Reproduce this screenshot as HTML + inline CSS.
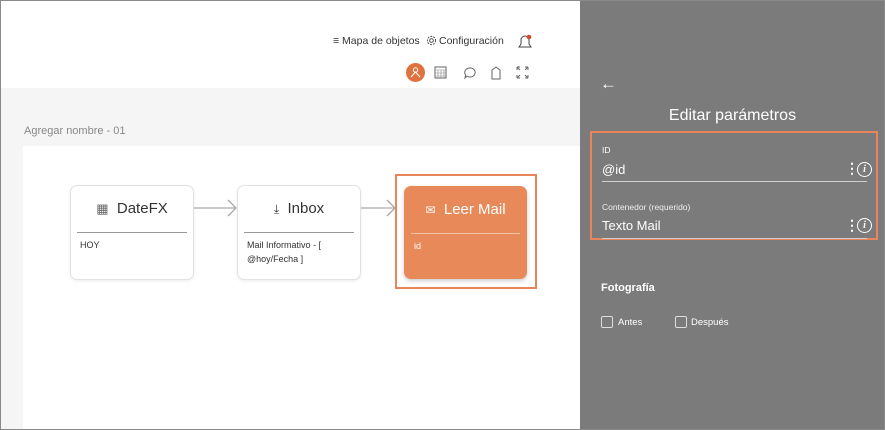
<!DOCTYPE html>
<html><head><meta charset="utf-8"><style>
*{box-sizing:border-box;margin:0;padding:0}
body{width:885px;height:430px;overflow:hidden;font-family:"Liberation Sans",sans-serif;background:#fff;position:relative}
.frame{position:absolute;inset:0;border:1px solid #8a8a8a;z-index:10;pointer-events:none}
.top{position:absolute;left:0;top:0;width:580px;height:88px;background:#fff}
.gray{position:absolute;left:0;top:88px;width:580px;height:342px;background:#f5f5f5}
.canvas{position:absolute;left:23px;top:146px;width:557px;height:284px;background:#fff}
.t{position:absolute;white-space:nowrap}
.card{position:absolute;top:185px;width:124px;height:95px;background:#fff;border:1px solid #e2e2e2;border-radius:7px;box-shadow:0 1px 3px rgba(0,0,0,.08)}
.card .h{position:absolute;top:14px;left:0;right:0;text-align:center;font-size:15px;color:#333}
.card .ln{position:absolute;top:46px;left:6px;right:6px;border-top:1px solid #999}
.card .b{position:absolute;top:52px;left:9px;font-size:9px;color:#333;line-height:14px}
.panel{position:absolute;left:580px;top:0;width:305px;height:430px;background:#7b7b7b;color:#fff}
.ul{position:absolute;height:1px;background:#d0d0d0}
.cb{position:absolute;width:12px;height:12px;border:1px solid #ddd;border-radius:2px}
</style></head><body>
<div class="top"></div>
<div class="gray"></div>
<div class="canvas"></div>
<div class="t" style="left:333px;top:35px;font-size:10.5px;color:#333">≡ Mapa de objetos</div>
<svg class="t" style="left:426px;top:35px" width="11" height="11" viewBox="0 0 12 12"><circle cx="6" cy="6" r="2" fill="none" stroke="#444"/><circle cx="6" cy="6" r="4.5" fill="none" stroke="#444" stroke-dasharray="2 1.3"/></svg>
<div class="t" style="left:439px;top:35px;font-size:10.5px;color:#333">Configuración</div>
<svg class="t" style="left:516px;top:32px" width="18" height="18" viewBox="0 0 18 18"><path d="M3 15h12l-2-3V8a4 4 0 0 0-8 0v4z" fill="none" stroke="#444"/><circle cx="13" cy="5" r="2.3" fill="#d9432f"/></svg>
<div class="t" style="left:406px;top:63px;width:19px;height:19px;border-radius:50%;background:#e0723f"></div>
<svg class="t" style="left:409px;top:66px" width="13" height="13" viewBox="0 0 13 13"><circle cx="6.5" cy="4" r="2.2" fill="none" stroke="#fff"/><path d="M2 11l4.5-5 4.5 5" fill="none" stroke="#fff"/></svg>
<svg class="t" style="left:434px;top:66px" width="13" height="13" viewBox="0 0 13 13"><rect x="1" y="1" width="11" height="11" fill="none" stroke="#666"/><path d="M1 4h11M1 7h11M1 10h11M4 4v8M7 4v8M10 4v8" stroke="#888" stroke-width=".6"/></svg>
<svg class="t" style="left:463px;top:66px" width="14" height="14" viewBox="0 0 14 14"><path d="M7 2a5 4.5 0 1 1-3 8l-2 2 .6-3A5 4.5 0 0 1 7 2z" fill="none" stroke="#666"/></svg>
<svg class="t" style="left:490px;top:65px" width="12" height="15" viewBox="0 0 12 15"><path d="M2 14V5l4-3 4 3v9z" fill="none" stroke="#666"/></svg>
<svg class="t" style="left:516px;top:66px" width="13" height="13" viewBox="0 0 13 13"><path d="M1 1l3 3M1 1v3M1 1h3M12 1l-3 3M12 1v3M12 1h-3M1 12l3-3M1 12v-3M1 12h3M12 12l-3-3M12 12v-3M12 12h-3" fill="none" stroke="#666"/></svg>
<div class="t" style="left:24px;top:125px;font-size:11px;color:#888">Agregar nombre - 01</div>

<div class="card" style="left:70px"><div class="h"><span style="font-size:13px;color:#666">▦</span>&nbsp; DateFX</div><div class="ln"></div><div class="b">HOY</div></div>
<div class="card" style="left:237px"><div class="h"><span style="font-size:12px">⤓</span>&nbsp; Inbox</div><div class="ln"></div><div class="b">Mail Informativo - [<br>@hoy/Fecha ]</div></div>
<svg class="t" style="left:194px;top:198px" width="44" height="20"><path d="M0 10h42M34 2l8 8-8 8" fill="none" stroke="#aaa" stroke-width="1.3"/></svg>
<svg class="t" style="left:361px;top:198px" width="36" height="20"><path d="M0 10h34M26 2l8 8-8 8" fill="none" stroke="#aaa" stroke-width="1.3"/></svg>
<div class="t" style="left:395px;top:174px;width:142px;height:115px;border:2px solid #e8855a"></div>
<div class="card" style="left:404px;top:186px;width:123px;height:93px;background:#e8895a;border-color:#e8895a;box-shadow:0 2px 4px rgba(0,0,0,.2)"><div class="h" style="color:#fff"><span style="font-size:12px">✉</span>&nbsp; Leer Mail</div><div class="ln" style="border-color:#f4c3a8"></div><div class="b" style="color:#fff">id</div></div>

<div class="panel">
<div class="t" style="left:20px;top:74px;font-size:17px">←</div>
<div class="t" style="left:0;width:305px;text-align:center;top:107px;font-size:16px">Editar parámetros</div>
<div class="t" style="left:10px;top:131px;width:288px;height:109px;border:2px solid #e8855a"></div>
<div class="t" style="left:22px;top:145px;font-size:8.5px">ID</div>
<div class="t" style="left:22px;top:162px;font-size:13px">@id</div>
<div class="t" style="left:265px;top:160px;font-size:14px;font-weight:bold">⋮</div>
<div class="t" style="left:277px;top:162px;width:15px;height:15px;border:1.3px solid #fff;border-radius:50%;font:italic bold 10px 'Liberation Serif',serif;text-align:center;line-height:13px">i</div>
<div class="ul" style="left:22px;top:181px;width:265px"></div>
<div class="t" style="left:22px;top:202px;font-size:8.5px;color:#eee">Contenedor (requerido)</div>
<div class="t" style="left:22px;top:218px;font-size:13px">Texto Mail</div>
<div class="t" style="left:265px;top:217px;font-size:14px;font-weight:bold">⋮</div>
<div class="t" style="left:277px;top:218px;width:15px;height:15px;border:1.3px solid #fff;border-radius:50%;font:italic bold 10px 'Liberation Serif',serif;text-align:center;line-height:13px">i</div>
<div class="ul" style="left:22px;top:238px;width:265px"></div>
<div class="t" style="left:21px;top:282px;font-size:11px;font-weight:bold">Fotografía</div>
<div class="cb" style="left:21px;top:316px"></div>
<div class="t" style="left:38px;top:317px;font-size:9.5px">Antes</div>
<div class="cb" style="left:95px;top:316px"></div>
<div class="t" style="left:111px;top:317px;font-size:9.5px">Después</div>
</div>
<div class="frame"></div>
</body></html>
